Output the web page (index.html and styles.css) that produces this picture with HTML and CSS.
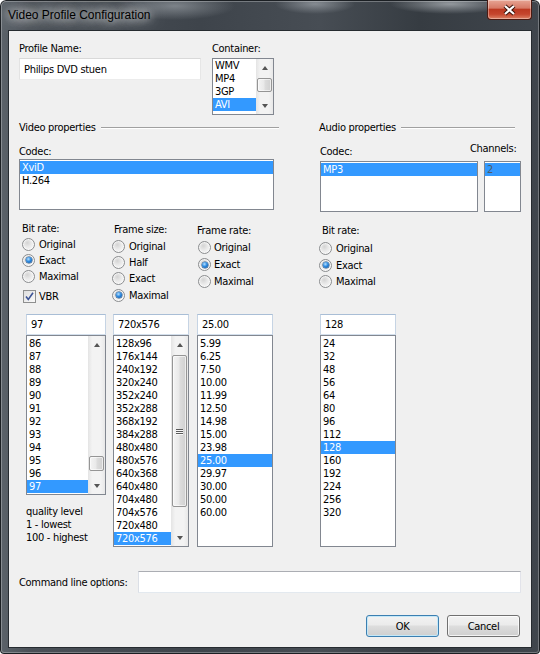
FILE: index.html
```html
<!DOCTYPE html>
<html lang="en">
<head>
  <meta charset="UTF-8">
  <meta name="viewport" content="width=device-width, initial-scale=1.0">
  <title>Video Profile Configuration</title>
  <link rel="stylesheet" href="styles.css">
</head>
<body>

<div class="window">
  <div class="titlebar">
    <span class="title">Video Profile Configuration</span>
    <div class="close">
      <svg width="45" height="20" viewBox="0 0 45 20">
        <path d="M18 6 L27 14 M27 6 L18 14" stroke="#3a1209" stroke-width="4.2" fill="none"/>
        <path d="M18 6 L27 14 M27 6 L18 14" stroke="#fff" stroke-width="2.2" fill="none"/>
      </svg>
    </div>
  </div>

  <div class="client">
    <!-- profile name + container -->
    <div class="row row-top">
      <div class="field profile">
        <div class="lbl">Profile Name:</div>
        <input class="edit profile-edit" type="text" value="Philips DVD stuen">
      </div>
      <div class="field cont">
        <div class="lbl">Container:</div>
        <div class="list container-list">
          <div class="items">
            <div class="item">WMV</div>
            <div class="item">MP4</div>
            <div class="item">3GP</div>
            <div class="item sel">AVI</div>
          </div>
          <div class="vscroll">
            <div class="sb-btn"><span class="arr up"></span></div>
            <div class="sb-track t-cont"><div class="thumb"></div></div>
            <div class="sb-btn"><span class="arr down"></span></div>
          </div>
        </div>
      </div>
    </div>

    <div class="row row-heads">
      <div class="group-head video-head"><span>Video properties</span></div>
      <div class="group-head audio-head"><span>Audio properties</span></div>
    </div>

    <div class="row row-codec">
      <div class="field vcodec">
        <div class="lbl">Codec:</div>
        <div class="list codec-list">
          <div class="items">
            <div class="item sel">XviD</div>
            <div class="item">H.264</div>
          </div>
        </div>
      </div>
      <div class="field acodec">
        <div class="lbl">Codec:</div>
        <div class="list codec-list">
          <div class="items">
            <div class="item sel">MP3</div>
          </div>
        </div>
      </div>
      <div class="field channels">
        <div class="lbl">Channels:</div>
        <div class="list codec-list">
          <div class="items">
            <div class="item sel dim">2</div>
          </div>
        </div>
      </div>
    </div>

    <!-- radio groups -->
    <div class="row row-options">
      <div class="opt-group g-vbit">
        <div class="lbl">Bit rate:</div>
        <div class="radio"><span class="dot"></span>Original</div>
        <div class="radio on"><span class="dot"></span>Exact</div>
        <div class="radio"><span class="dot"></span>Maximal</div>
        <div class="check">
          <span class="box">
            <svg width="11" height="11" viewBox="0 0 11 11"><path d="M2 5.5 L4.3 8.5 L9 1.8" stroke="#3d5496" stroke-width="1.6" fill="none"/></svg>
          </span>VBR
        </div>
      </div>
      <div class="opt-group g-fsize">
        <div class="lbl">Frame size:</div>
        <div class="radio"><span class="dot"></span>Original</div>
        <div class="radio"><span class="dot"></span>Half</div>
        <div class="radio"><span class="dot"></span>Exact</div>
        <div class="radio on"><span class="dot"></span>Maximal</div>
      </div>
      <div class="opt-group g-frate">
        <div class="lbl">Frame rate:</div>
        <div class="radio"><span class="dot"></span>Original</div>
        <div class="radio on"><span class="dot"></span>Exact</div>
        <div class="radio"><span class="dot"></span>Maximal</div>
      </div>
      <div class="opt-group g-abit">
        <div class="lbl">Bit rate:</div>
        <div class="radio"><span class="dot"></span>Original</div>
        <div class="radio on"><span class="dot"></span>Exact</div>
        <div class="radio"><span class="dot"></span>Maximal</div>
      </div>
    </div>

    <!-- value lists -->
    <div class="row row-lists">
      <div class="combo c-vbit">
        <input class="edit combo-edit" type="text" value="97">
        <div class="list short">
          <div class="items">
            <div class="item">86</div>
            <div class="item">87</div>
            <div class="item">88</div>
            <div class="item">89</div>
            <div class="item">90</div>
            <div class="item">91</div>
            <div class="item">92</div>
            <div class="item">93</div>
            <div class="item">94</div>
            <div class="item">95</div>
            <div class="item">96</div>
            <div class="item sel">97</div>
          </div>
          <div class="vscroll">
            <div class="sb-btn"><span class="arr up"></span></div>
            <div class="sb-track t-vbit"><div class="thumb"></div></div>
            <div class="sb-btn"><span class="arr down"></span></div>
          </div>
        </div>
        <div class="note">quality level<br>1 - lowest<br>100 - highest</div>
      </div>

      <div class="combo c-fsize">
        <input class="edit combo-edit" type="text" value="720x576">
        <div class="list tall">
          <div class="items">
            <div class="item">128x96</div>
            <div class="item">176x144</div>
            <div class="item">240x192</div>
            <div class="item">320x240</div>
            <div class="item">352x240</div>
            <div class="item">352x288</div>
            <div class="item">368x192</div>
            <div class="item">384x288</div>
            <div class="item">480x480</div>
            <div class="item">480x576</div>
            <div class="item">640x368</div>
            <div class="item">640x480</div>
            <div class="item">704x480</div>
            <div class="item">704x576</div>
            <div class="item">720x480</div>
            <div class="item sel">720x576</div>
          </div>
          <div class="vscroll">
            <div class="sb-btn"><span class="arr up"></span></div>
            <div class="sb-track t-fsize"><div class="thumb grip"></div></div>
            <div class="sb-btn"><span class="arr down"></span></div>
          </div>
        </div>
      </div>

      <div class="combo c-frate">
        <input class="edit combo-edit" type="text" value="25.00">
        <div class="list tall">
          <div class="items">
            <div class="item">5.99</div>
            <div class="item">6.25</div>
            <div class="item">7.50</div>
            <div class="item">10.00</div>
            <div class="item">11.99</div>
            <div class="item">12.50</div>
            <div class="item">14.98</div>
            <div class="item">15.00</div>
            <div class="item">23.98</div>
            <div class="item sel">25.00</div>
            <div class="item">29.97</div>
            <div class="item">30.00</div>
            <div class="item">50.00</div>
            <div class="item">60.00</div>
          </div>
        </div>
      </div>

      <div class="combo c-abit">
        <input class="edit combo-edit" type="text" value="128">
        <div class="list tall">
          <div class="items">
            <div class="item">24</div>
            <div class="item">32</div>
            <div class="item">48</div>
            <div class="item">56</div>
            <div class="item">64</div>
            <div class="item">80</div>
            <div class="item">96</div>
            <div class="item">112</div>
            <div class="item sel">128</div>
            <div class="item">160</div>
            <div class="item">192</div>
            <div class="item">224</div>
            <div class="item">256</div>
            <div class="item">320</div>
          </div>
        </div>
      </div>
    </div>

    <div class="row row-cmd">
      <span class="lbl cmd-lbl">Command line options:</span>
      <input class="edit cmd-edit" type="text" value="">
    </div>

    <div class="row row-buttons">
      <button class="btn default">OK</button>
      <button class="btn">Cancel</button>
    </div>
  </div>
</div>

</body>
</html>
```

FILE: styles.css
```css
* {
  box-sizing: border-box;
}

body {
  margin: 0;
  background: #fff;
  font-family: "DejaVu Sans Condensed", "DejaVu Sans", "Liberation Sans", sans-serif;
  font-stretch: semi-condensed;
  font-size: 11px;
  line-height: 13px;
  letter-spacing: -0.3px;
  color: #000;
}

/* window chrome */
.window {
  width: 540px;
  height: 654px;
  padding: 0 8px 6px 8px;
  display: flex;
  flex-direction: column;
  border-radius: 6px 6px 4px 4px;
  background:
    radial-gradient(ellipse 60px 14px at 175px 6px, rgba(150,156,162,0.7), rgba(150,156,162,0) 100%),
    radial-gradient(ellipse 40px 10px at 315px 4px, rgba(160,166,172,0.7), rgba(160,166,172,0) 100%),
    radial-gradient(ellipse 60px 10px at 450px 4px, rgba(170,175,180,0.8), rgba(170,175,180,0) 100%),
    linear-gradient(90deg, #5c636a 0, #4a5057 30px, #3e444b 200px, #474d54 320px, #363c42 420px, #40464d 540px);
  box-shadow: inset 0 0 0 1px #1b1f23, inset 0 0 0 2px rgba(255,255,255,0.28);
}

.titlebar {
  height: 30px;
  display: flex;
  justify-content: space-between;
  align-items: flex-start;
}

.title {
  margin-top: 8px;
  font-family: "Liberation Sans", sans-serif;
  font-stretch: normal;
  font-size: 12px;
  line-height: 15px;
  letter-spacing: 0;
  color: #000;
  text-shadow: 0 0 8px rgba(255,255,255,0.95), 0 0 14px rgba(255,255,255,0.85), 0 0 24px rgba(255,255,255,0.7);
}

.close {
  width: 45px;
  height: 20px;
  border: 1px solid #4a1a12;
  border-top: none;
  border-radius: 0 0 4px 4px;
  background: linear-gradient(#e7a594 0%, #d77a66 42%, #bd3a22 50%, #c5462e 75%, #dd8265 100%);
  box-shadow: inset 0 0 0 1px rgba(255,255,255,0.35);
}

.close svg {
  display: block;
  margin: 0 -1px;
}

.client {
  flex: 1;
  background: #f0f0f0;
  border: 1px solid #262b30;
  padding: 11px 10px 0 10px;
}

/* rows */
.row {
  display: flex;
  align-items: flex-start;
}

.row-top { height: 73px; }
.row-heads { height: 13px; margin-top: 6px; }
.row-codec { height: 71px; margin-top: 7px; }
.row-options { height: 102px; }
.row-lists { height: 233px; }
.row-cmd { height: 22px; margin-top: 24px; align-items: center; }
.row-buttons { height: 22px; margin-top: 22px; justify-content: flex-end; padding-right: 1px; }

.lbl {
  white-space: nowrap;
}

/* edits */
.edit {
  display: block;
  font: inherit;
  letter-spacing: inherit;
  color: #000;
  background: #fff;
  border: 1px solid;
  border-color: #abadb3 #e2e3ea #e3e9ef #dbdfe6;
  padding: 0 4px;
  outline: none;
  margin: 0;
}

.profile-edit {
  width: 182px;
  height: 22px;
  margin-top: 3px;
  border-color: #d9d9d9 #e6e6e6 #ececec #e3e3e3;
}

.cont {
  margin-left: 11px;
}

/* list boxes */
.list {
  display: flex;
  background: #fff;
  border: 1px solid #828790;
  overflow: hidden;
}

.items {
  flex: 1;
  min-width: 0;
  padding: 1px 0;
}

.item {
  height: 13px;
  line-height: 13px;
  padding-left: 2px;
  white-space: nowrap;
}

.item.sel {
  background: #3399ff;
  color: #fff;
}

.item.dim {
  color: #4f5966;
}

.container-list {
  width: 62px;
  height: 57px;
  margin-top: 3px;
}

.container-list .items {
  padding-top: 0;
}

/* scrollbars */
.vscroll {
  width: 17px;
  display: flex;
  flex-direction: column;
  background: linear-gradient(90deg, #e4e4e4 0, #f3f3f3 25%, #f3f3f3 75%, #e8e8e8 100%);
}

.sb-btn {
  height: 17px;
  display: flex;
  align-items: center;
  justify-content: center;
}

.sb-track {
  flex: 1;
  padding: 0 1px;
}

.arr {
  width: 0;
  height: 0;
  border-left: 3.5px solid transparent;
  border-right: 3.5px solid transparent;
}

.arr.up { border-bottom: 4px solid #555; }
.arr.down { border-top: 4px solid #555; }

.thumb {
  height: 15px;
  border: 1px solid #959595;
  border-radius: 2px;
  background: linear-gradient(90deg, #f4f4f4 0, #e9e9e9 45%, #dcdcdc 55%, #d0d0d0 100%);
  box-shadow: inset 0 0 0 1px rgba(255,255,255,0.6);
}

.t-cont .thumb { margin-top: 2px; height: 14px; }
.t-vbit .thumb { margin-top: 103px; }
.t-fsize .thumb { margin-top: 2px; height: 152px; }

.thumb.grip {
  display: flex;
  align-items: center;
  justify-content: center;
}

.thumb.grip::after {
  content: '';
  width: 7px;
  height: 1px;
  background: #5a5a5a;
  box-shadow: 0 -2px #5a5a5a, 0 2px #5a5a5a, 0 -1px #f8f8f8, 0 1px #f8f8f8, 0 3px #f8f8f8;
}

/* group headers */
.group-head {
  display: flex;
  align-items: center;
}

.group-head::after {
  content: '';
  flex: 1;
  height: 1px;
  margin-left: 5px;
  background: #a0a0a0;
  border-bottom: 1px solid #fff;
  box-sizing: content-box;
}

.video-head { width: 260px; }
.audio-head { width: 196px; margin-left: 40px; }

/* codec lists */
.vcodec { width: 255px; padding-top: 4px; }
.vcodec .list { margin-top: 1px; }

.acodec { width: 158px; margin-left: 46px; padding-top: 4px; }
.acodec .list { margin-top: 3px; }

.channels { width: 37px; margin-left: 6px; padding-top: 1px; }
.channels .lbl { margin-left: -14px; }
.channels .list { margin-top: 6px; }

.codec-list {
  height: 51px;
}

/* radios and checkbox */
.opt-group .radio {
  display: flex;
  align-items: center;
  white-space: nowrap;
}

.dot {
  position: relative;
  width: 13px;
  height: 13px;
  margin-right: 4px;
  border-radius: 50%;
  border: 1px solid #8b8d8f;
  background: radial-gradient(circle at 40% 35%, #d4d4d4 0, #ebebeb 45%, #fdfdfd 100%);
  box-shadow: inset 0 0 0 1px rgba(255,255,255,0.5);
  flex: none;
}

.radio.on .dot::after {
  content: '';
  position: absolute;
  left: 2.5px;
  top: 2.5px;
  width: 6px;
  height: 6px;
  border-radius: 50%;
  background: radial-gradient(circle at 40% 35%, #b7e1ff 0, #2d8ae0 45%, #0c4a93 100%);
  box-shadow: 0 0 0 0.5px #26507e;
}

.check {
  display: flex;
  align-items: center;
  height: 17px;
  margin-top: 4px;
}

.box {
  width: 13px;
  height: 13px;
  margin: 0 3px 0 1px;
  border: 1px solid #8e8f8f;
  background: linear-gradient(135deg, #dedede, #fafafa);
  display: flex;
  align-items: center;
  justify-content: center;
}

.box svg {
  display: block;
}

.g-vbit { width: 90px; margin-left: 3px; padding-top: 10px; }
.g-vbit .lbl { margin-bottom: 1px; }
.g-vbit .radio { height: 16px; }

.g-fsize { width: 85px; padding-top: 11px; }
.g-fsize .lbl { padding-left: 2px; margin-bottom: 2px; }
.g-fsize .radio { height: 16.3px; }

.g-frate { width: 122px; padding-top: 12px; }
.g-frate .lbl { margin-bottom: 2.5px; }
.g-frate .radio { height: 16.8px; }
.g-frate .dot { margin-left: 1px; margin-right: 3px; }

.g-abit { padding-top: 12px; }
.g-abit .lbl { padding-left: 3px; margin-bottom: 3.8px; }
.g-abit .radio { height: 16.4px; }

/* combo lists */
.combo .combo-edit {
  width: 100%;
  height: 21px;
  border-color: #a9bed6 #c6d4e4 #d3dfec #c6d4e4;
}

.c-vbit { width: 80px; margin-left: 7px; }
.c-fsize { width: 76px; margin-left: 7px; }
.c-frate { width: 76px; margin-left: 8px; }
.c-abit { width: 76px; margin-left: 47px; }

.list.short { height: 160px; }
.list.tall { height: 212px; }

.note {
  margin-top: 10px;
  line-height: 13px;
}

/* bottom */
.cmd-edit {
  width: 383px;
  height: 22px;
  margin-left: auto;
}

.btn {
  width: 73px;
  height: 22px;
  font: inherit;
  letter-spacing: inherit;
  color: #000;
  padding: 0;
  border: 1px solid #707070;
  border-radius: 3px;
  background: linear-gradient(#f2f2f2 0%, #ebebeb 45%, #dddddd 50%, #cfcfcf 100%);
  box-shadow: inset 0 0 0 1px rgba(255,255,255,0.75);
}

.btn + .btn {
  margin-left: 8px;
}

.btn.default {
  border-color: #3c7fb1;
  box-shadow: inset 0 0 0 1px #c4e8f8;
}
```
